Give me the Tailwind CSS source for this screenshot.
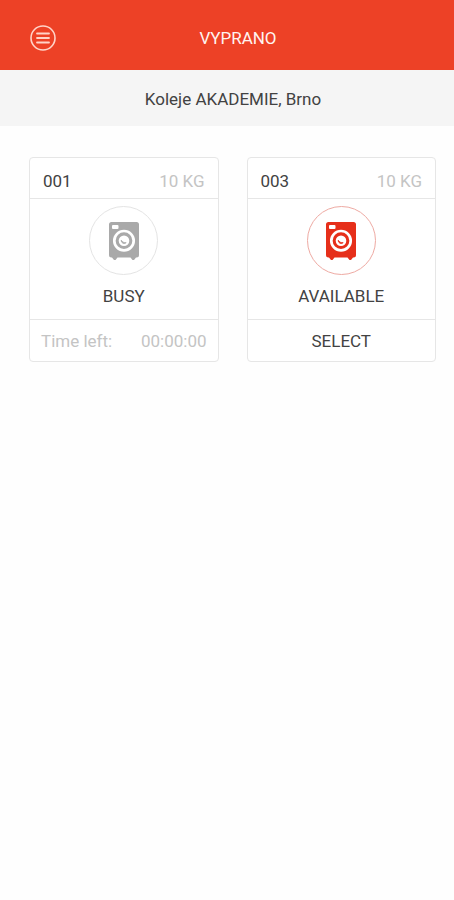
<!DOCTYPE html>
<html lang="en">
<head>
<meta charset="utf-8">
<meta name="viewport" content="width=device-width, initial-scale=1">
<title>Vyprano</title>
<script src="https://cdn.jsdelivr.net/npm/@tailwindcss/browser@4"></script>
</head>
<body class="min-h-screen bg-[#fefefe] font-[Roboto,sans-serif] text-[17px] leading-5 text-[#424242]">
<svg class="hidden" aria-hidden="true">
  <symbol id="washer" viewBox="0 0 32 40">
    <path fill="currentColor" d="M3.500 1h25a2.500 2.500 0 0 1 2.500 2.500v30.500a2.500 2.500 0 0 1-2.500 2.500H28l-2 2.500h-1.500L22.500 36.500H9.500L7.500 39H6L4 36.500H3.500A2.500 2.500 0 0 1 1 34V3.500A2.500 2.500 0 0 1 3.500 1z"/>
    <rect x="4" y="4" width="6.500" height="4" rx="1" fill="#fff"/>
    <circle cx="16" cy="19.700" r="9.700" fill="none" stroke="#fff" stroke-width="2.700"/>
    <circle cx="16" cy="19.700" r="5.300" fill="#fff"/>
    <path d="M13.200 19.200a3 3 0 0 0 5 2.500c-2 .2-3.600-.6-5-2.500z" fill="currentColor" stroke="currentColor" stroke-width=".8" stroke-linejoin="round"/>
  </symbol>
</svg>
<header class="grid grid-cols-[26px_1fr_26px] items-center bg-[#ed4126] pt-[25px] pr-2 pb-[19px] pl-[30px] text-[#fff3f0]">
  <button type="button" aria-label="Menu" class="size-[26px]">
    <svg viewBox="0 0 26 26" class="size-[26px]" fill="none" stroke="#ffd3c8">
      <circle cx="13" cy="13" r="12" stroke-width="1.600"/>
      <path d="M7 8.500h12M7 13h12M7 17.500h12" stroke-width="1.800" stroke-linecap="round"/>
    </svg>
  </button>
  <h1 class="text-center">VYPRANO</h1>
</header>
<p class="bg-[#f5f5f5] pt-[19px] pr-1 pb-[17px] pl-4 text-center">Koleje AKADEMIE, Brno</p>
<main class="grid grid-cols-2 gap-7 pt-[31px] pr-[18px] pl-[29px]">
  <article class="rounded-sm border border-[#e6e6e6] bg-white">
    <div class="flex justify-between border-b border-[#e6e6e6] px-[13px] pt-[13px] pb-[7px]"><h2>001</h2><span class="text-[#c4c4c4]">10 KG</span></div>
    <div class="flex flex-col items-center gap-[11px] border-b border-[#e6e6e6] pt-[7px] pb-[13px]">
      <div class="flex size-[69px] items-center justify-center rounded-full border border-[#e4e4e4] text-[#a9a9a9]"><svg class="h-10 w-8"><use href="#washer"/></svg></div>
      <p>BUSY</p>
    </div>
    <div class="flex justify-between px-[11px] pt-[11px] pb-[10px] text-[#c4c4c4]"><span>Time left:</span><span>00:00:00</span></div>
  </article>
  <article class="rounded-sm border border-[#e6e6e6] bg-white">
    <div class="flex justify-between border-b border-[#e6e6e6] px-[13px] pt-[13px] pb-[7px]"><h2>003</h2><span class="text-[#c4c4c4]">10 KG</span></div>
    <div class="flex flex-col items-center gap-[11px] border-b border-[#e6e6e6] pt-[7px] pb-[13px]">
      <div class="flex size-[69px] items-center justify-center rounded-full border border-[#eeaaa3] text-[#e62f1a]"><svg class="h-10 w-8"><use href="#washer"/></svg></div>
      <p>AVAILABLE</p>
    </div>
    <button type="button" class="block w-full pt-[11px] pb-[10px] text-center">SELECT</button>
  </article>
</main>
</body>
</html>
